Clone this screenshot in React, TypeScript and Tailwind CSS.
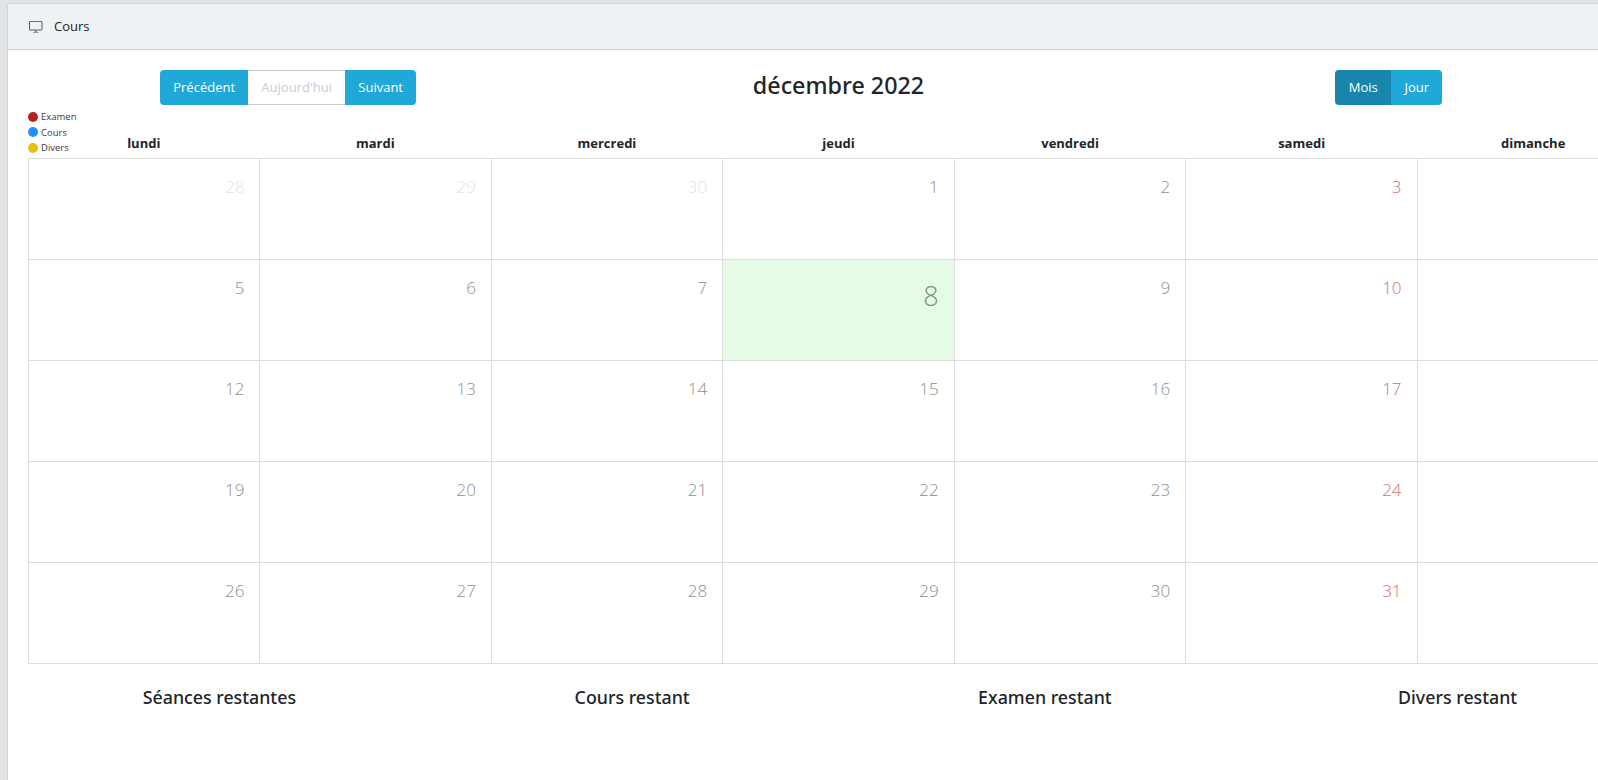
const days = ["lundi", "mardi", "mercredi", "jeudi", "vendredi", "samedi", "dimanche"];

const weeks = [
  [28, 29, 30, 1, 2, 3, 4],
  [5, 6, 7, 8, 9, 10, 11],
  [12, 13, 14, 15, 16, 17, 18],
  [19, 20, 21, 22, 23, 24, 25],
  [26, 27, 28, 29, 30, 31, 1],
];

function MonitorIcon() {
  return (
    <svg width="16" height="14" viewBox="0 0 16 14" fill="none">
      <rect x="1.5" y="1.5" width="12.5" height="8.5" rx="0.5" stroke="#55556a" />
      <path d="M1.5 1.5h12.5" stroke="#7a5ea8" />
      <path d="M6.5 10.5h2.5v1.5H6.5z" fill="#8a8a8a" />
      <path d="M5 12.5h5.5" stroke="#9a9a9a" />
    </svg>
  );
}

function DayCell({ day, week, col }: { day: number; week: number; col: number }) {
  const other = week === 0 && col < 3;
  const today = week === 1 && col === 3;
  const sat = col === 5;
  let color = "text-[#8e8e8e]";
  if (other) color = "text-[#e4e4e4]";
  if (sat) color = "text-[#c97474]";
  if (today) color = "text-[#7a8f80]";
  return (
    <div
      className={
        "h-[101px] border-r border-b border-[#dedede] pr-[15px] text-right font-light " +
        color +
        (today ? " bg-[#e6fbe6] pt-[18px] text-[27px] leading-[36px]" : " pt-[16px] text-[17px] leading-[23px]")
      }
    >
      {/* la colonne dimanche sort de l'ecran */}
      {col === 6 ? null : day}
    </div>
  );
}

export default function App() {
  return (
    <div className="h-[780px] w-[1598px] overflow-hidden bg-[#e2e3e5] pt-[3px] pl-[7px] font-['Open_Sans',sans-serif] text-[#212529]">
      <div className="h-[777px] w-[1700px] rounded-tl-[4px] border-t border-l border-[#cfd3d7] bg-white">
        <div className="flex h-[46px] items-center gap-[10px] border-b border-[#ccd0d4] bg-[#eff2f5] pl-[20px] text-[13px]">
          <MonitorIcon />
          <span>Cours</span>
        </div>
        <div className="relative w-[1661px] px-[20px] pt-[20px]">
          <div className="-mx-[15px] grid h-[35px] grid-cols-3 items-center text-center">
            <div className="flex justify-center">
              <div className="flex h-[35px] overflow-hidden rounded-[4px] text-[13px] leading-[35px]">
                <div className="w-[88px] bg-[#20a8d8] text-white">Précédent</div>
                <div className="w-[97px] border-y border-[#c8ced3] leading-[33px] text-[#c8ced3]">Aujourd'hui</div>
                <div className="w-[71px] bg-[#20a8d8] text-white">Suivant</div>
              </div>
            </div>
            <div className="-mt-[5px] font-['Noto_Sans',sans-serif] text-[23.3px] leading-[35px] font-medium">décembre 2022</div>
            <div className="flex justify-center">
              <div className="flex h-[35px] overflow-hidden rounded-[4px] text-[13px] leading-[35px] text-white">
                <div className="w-[56px] bg-[#1985ac]">Mois</div>
                <div className="w-[51px] bg-[#20a8d8]">Jour</div>
              </div>
            </div>
          </div>

          <div className="absolute top-[59px] left-[20px] flex flex-col text-[9.5px] leading-[15.5px] text-[#3a3a3a]">
            <div className="flex items-center gap-[3px]"><span className="size-[10px] rounded-full bg-[#b22222]" />Examen</div>
            <div className="flex items-center gap-[3px]"><span className="size-[10px] rounded-full bg-[#1e90ff]" />Cours</div>
            <div className="flex items-center gap-[3px]"><span className="size-[10px] rounded-full bg-[#e8bf0c]" />Divers</div>
          </div>

          <div className="mt-[24px] grid grid-cols-7 pb-[1px] text-center text-[13px] leading-[28px] font-bold">
            {days.map((d) => (
              <div key={d}>{d}</div>
            ))}
          </div>
          <div className="grid grid-cols-7 border-t border-l border-[#dedede]">
            {weeks.map((w, i) =>
              w.map((d, j) => <DayCell key={i + "-" + j} day={d} week={i} col={j} />)
            )}
          </div>

          <div className="-mx-[15px] mt-[21px] grid grid-cols-4 text-center font-['Noto_Sans',sans-serif] text-[17.8px] leading-[24px] font-medium">
            <div>Séances restantes</div>
            <div>Cours restant</div>
            <div>Examen restant</div>
            <div>Divers restant</div>
          </div>
        </div>
      </div>
    </div>
  );
}
